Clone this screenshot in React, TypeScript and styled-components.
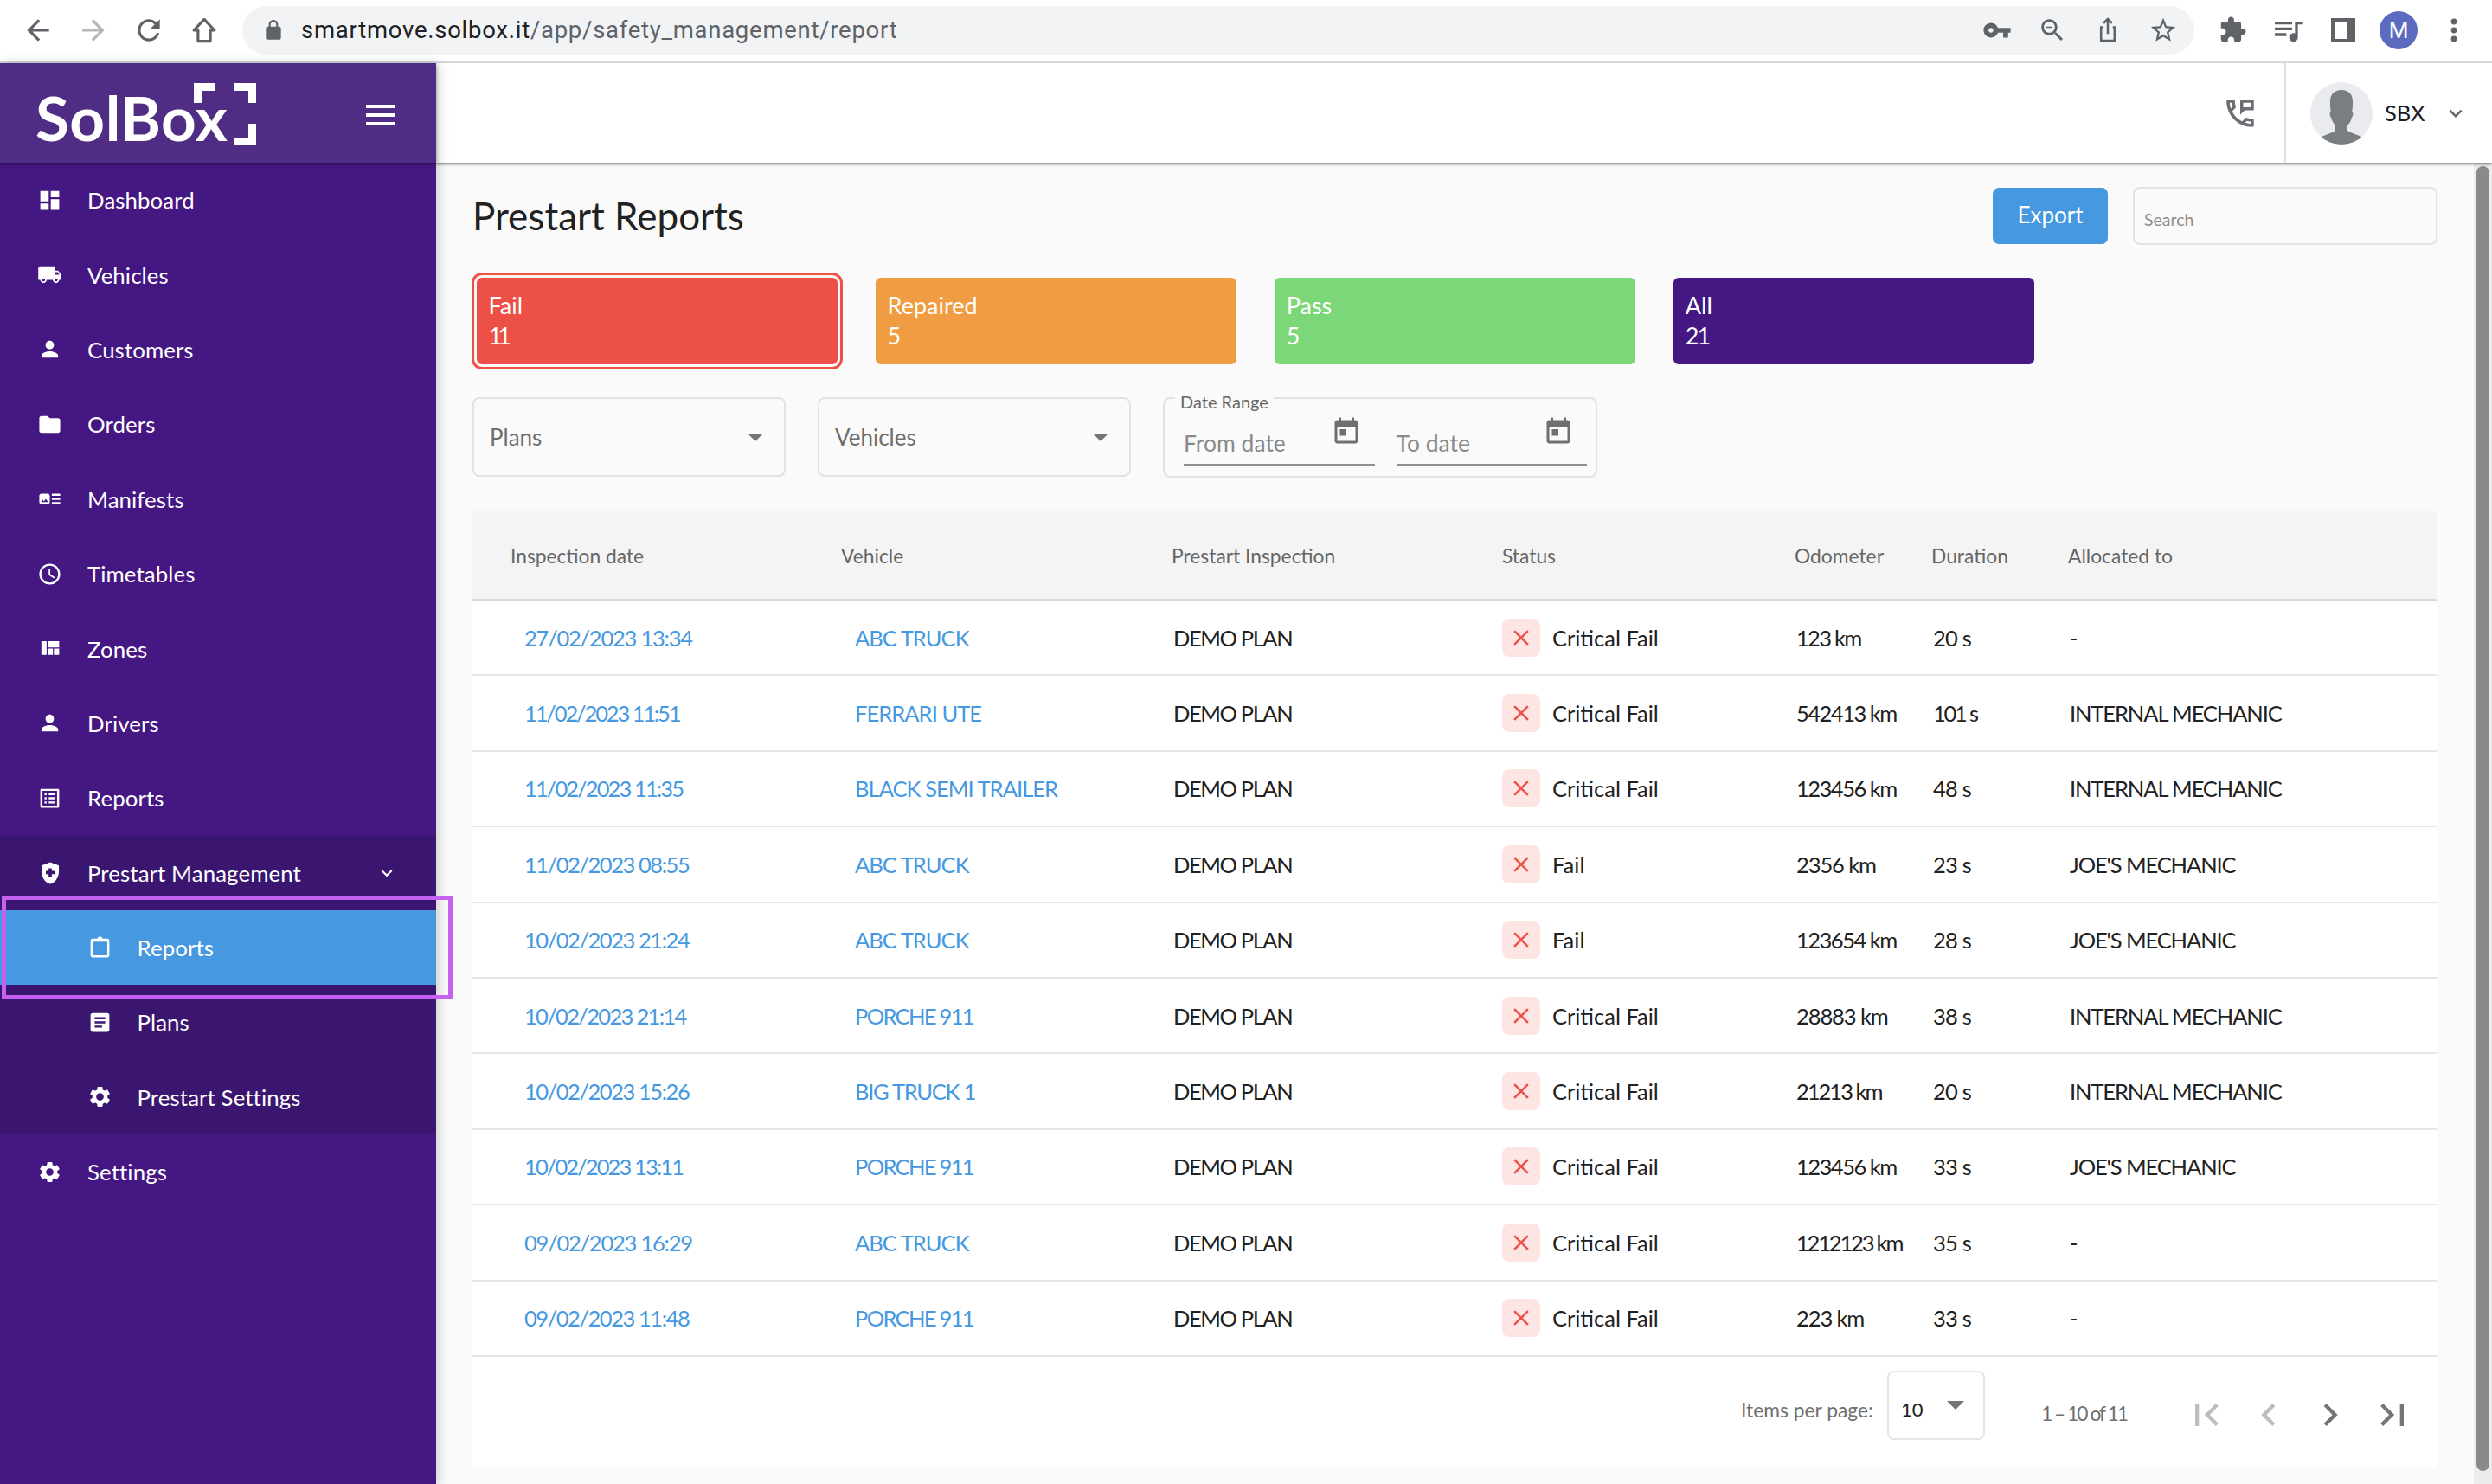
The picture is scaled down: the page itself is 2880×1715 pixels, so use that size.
import React from "react";
import styled, { createGlobalStyle } from "styled-components";

const FONT = `"Lato", "Open Sans", "Liberation Sans", sans-serif`;

const Global = createGlobalStyle`
  html, body { margin: 0; padding: 0; width: 2880px; height: 1715px; overflow: hidden; background: #fafafa; }
  * { box-sizing: border-box; }
  body { font-family: ${FONT}; }
`;

const P = {
  back: "M20 11H7.83l5.59-5.59L12 4l-8 8 8 8 1.41-1.41L7.83 13H20v-2z",
  reload: "M17.65 6.35C16.2 4.9 14.21 4 12 4c-4.42 0-7.99 3.58-7.99 8s3.57 8 7.99 8c3.73 0 6.84-2.55 7.73-6h-2.08c-.82 2.33-3.04 4-5.65 4-3.31 0-6-2.69-6-6s2.69-6 6-6c1.66 0 3.14.69 4.22 1.78L13 11h7V4l-2.35 2.35z",
  lock: "M18 8h-1V6c0-2.76-2.24-5-5-5S7 3.24 7 6v2H6c-1.1 0-2 .9-2 2v10c0 1.1.9 2 2 2h12c1.1 0 2-.9 2-2V10c0-1.1-.9-2-2-2zM9 6c0-1.66 1.34-3 3-3s3 1.34 3 3v2H9V6z",
  key: "M12.65 10C11.83 7.67 9.61 6 7 6c-3.31 0-6 2.69-6 6s2.69 6 6 6c2.61 0 4.83-1.67 5.65-4H17v4h4v-4h2v-4H12.65zM7 14c-1.1 0-2-.9-2-2s.9-2 2-2 2 .9 2 2-.9 2-2 2z",
  zoomOut: "M15.5 14h-.79l-.28-.27C15.41 12.59 16 11.11 16 9.5 16 5.91 13.09 3 9.5 3S3 5.91 3 9.5 5.91 16 9.5 16c1.61 0 3.09-.59 4.23-1.57l.27.28v.79l5 4.99L20.49 19l-4.99-5zm-6 0C7.01 14 5 11.99 5 9.5S7.01 5 9.5 5 14 7.01 14 9.5 11.99 14 9.5 14zM7 9h5v1H7z",
  star: "M22 9.24l-7.19-.62L12 2 9.19 8.63 2 9.24l5.46 4.73L5.82 21 12 17.27 18.18 21l-1.63-7.03L22 9.24zM12 15.4l-3.76 2.27 1-4.28-3.32-2.88 4.38-.38L12 6.1l1.71 4.04 4.38.38-3.32 2.88 1 4.28L12 15.4z",
  puzzle: "M20.5 11H19V7c0-1.1-.9-2-2-2h-4V3.5C13 2.12 11.88 1 10.5 1S8 2.12 8 3.5V5H4c-1.1 0-1.99.9-1.99 2v3.8H3.5c1.49 0 2.7 1.21 2.7 2.7s-1.21 2.7-2.7 2.7H2V20c0 1.1.9 2 2 2h3.8v-1.5c0-1.49 1.21-2.7 2.7-2.7 1.49 0 2.7 1.21 2.7 2.7V22H17c1.1 0 2-.9 2-2v-4h1.5c1.38 0 2.5-1.12 2.5-2.5S21.88 11 20.5 11z",
  queue: "M15 6H3v2h12V6zm0 4H3v2h12v-2zM3 16h8v-2H3v2zM17 6v8.18c-.31-.11-.65-.18-1-.18-1.66 0-3 1.34-3 3s1.34 3 3 3 3-1.34 3-3V8h3V6h-5z",
  dashboard: "M3 13h8V3H3v10zm0 8h8v-6H3v6zm10 0h8V11h-8v10zm0-18v6h8V3h-8z",
  truck: "M20 8h-3V4H3c-1.1 0-2 .9-2 2v11h2c0 1.66 1.34 3 3 3s3-1.34 3-3h6c0 1.66 1.34 3 3 3s3-1.34 3-3h2v-5l-3-4zM6 18.5c-.83 0-1.5-.67-1.5-1.5s.67-1.5 1.5-1.5 1.5.67 1.5 1.5-.67 1.5-1.5 1.5zm13.5-9l1.96 2.5H17V9.5h2.5zm-1.5 9c-.83 0-1.5-.67-1.5-1.5s.67-1.5 1.5-1.5 1.5.67 1.5 1.5-.67 1.5-1.5 1.5z",
  person: "M12 12c2.21 0 4-1.79 4-4s-1.79-4-4-4-4 1.79-4 4 1.79 4 4 4zm0 2c-2.67 0-8 1.34-8 4v2h16v-2c0-2.66-5.33-4-8-4z",
  folder: "M10 4H4c-1.1 0-1.99.9-1.99 2L2 18c0 1.1.9 2 2 2h16c1.1 0 2-.9 2-2V8c0-1.1-.9-2-2-2h-8l-2-2z",
  artTrack: "M22 13h-8v-2h8v2zm0-6h-8v2h8V7zm-8 10h8v-2h-8v2zm-2-8v6c0 1.1-.9 2-2 2H4c-1.1 0-2-.9-2-2V9c0-1.1.9-2 2-2h6c1.1 0 2 .9 2 2zm-1.5 6l-2.25-3-1.75 2.26-1.25-1.51L3.5 15h7z",
  schedule: "M11.99 2C6.47 2 2 6.48 2 12s4.47 10 9.99 10C17.52 22 22 17.52 22 12S17.52 2 11.99 2zM12 20c-4.42 0-8-3.58-8-8s3.58-8 8-8 8 3.58 8 8-3.58 8-8 8zm.5-13H11v6l5.25 3.15.75-1.23-4.5-2.67z",
  quilt: "M10 18h5v-6h-5v6zm-6 0h5V5H4v13zm12 0h5v-6h-5v6zM10 5v6h11V5H10z",
  listAlt: "M19 5v14H5V5h14m1.1-2H3.9c-.5 0-.9.4-.9.9v16.2c0 .4.4.9.9.9h16.2c.4 0 .9-.5.9-.9V3.9c0-.5-.5-.9-.9-.9zM11 7h6v2h-6V7zm0 4h6v2h-6v-2zm0 4h6v2h-6zM7 7h2v2H7zm0 4h2v2H7zm0 4h2v2H7z",
  shield: "M10.5 13H8v-3h2.5V7.5h3V10H16v3h-2.5v2.5h-3V13zM12 2L4 5v6.09c0 5.05 3.41 9.76 8 10.91 4.59-1.15 8-5.86 8-10.91V5l-8-3z",
  expand: "M16.59 8.59L12 13.17 7.41 8.59 6 10l6 6 6-6z",
  article: "M19 3H5c-1.1 0-2 .9-2 2v14c0 1.1.9 2 2 2h14c1.1 0 2-.9 2-2V5c0-1.1-.9-2-2-2zm-5 14H7v-2h7v2zm3-4H7v-2h10v2zm0-4H7V7h10v2z",
  clip: "M19 3h-4.5C14.2 1.8 13.2 1 12 1S9.8 1.8 9.5 3H5c-1.1 0-2 .9-2 2v14c0 1.1.9 2 2 2h14c1.1 0 2-.9 2-2V5c0-1.1-.9-2-2-2zM19 19H5V6h14v13z",
  gear: "M19.14 12.94c.04-.3.06-.61.06-.94 0-.32-.02-.64-.07-.94l2.03-1.58c.18-.14.23-.41.12-.61l-1.92-3.32c-.12-.22-.37-.29-.59-.22l-2.39.96c-.5-.38-1.03-.7-1.62-.94l-.36-2.54c-.04-.24-.24-.41-.48-.41h-3.84c-.24 0-.43.17-.47.41l-.36 2.54c-.59.24-1.13.57-1.62.94l-2.39-.96c-.22-.08-.47 0-.59.22L2.74 8.87c-.12.21-.08.47.12.61l2.03 1.58c-.05.3-.09.63-.09.94s.02.64.07.94l-2.03 1.58c-.18.14-.23.41-.12.61l1.92 3.32c.12.22.37.29.59.22l2.39-.96c.5.38 1.03.7 1.62.94l.36 2.54c.05.24.24.41.48.41h3.84c.24 0 .44-.17.47-.41l.36-2.54c.59-.24 1.13-.56 1.62-.94l2.39.96c.22.08.47 0 .59-.22l1.92-3.32c.12-.22.07-.47-.12-.61l-2.01-1.58zM12 15.6c-1.98 0-3.6-1.62-3.6-3.6s1.62-3.6 3.6-3.6 3.6 1.62 3.6 3.6-1.62 3.6-3.6 3.6z",
  today: "M19 3h-1V1h-2v2H8V1H6v2H5c-1.11 0-1.99.9-1.99 2L3 19c0 1.1.89 2 2 2h14c1.1 0 2-.9 2-2V5c0-1.1-.9-2-2-2zm0 16H5V8h14v11zM7 10h5v5H7z",
  first: "M18.41 16.59L13.82 12l4.59-4.59L17 6l-6 6 6 6zM6 6h2v12H6z",
  last: "M5.59 7.41L10.18 12l-4.59 4.59L7 18l6-6-6-6zM16 6h2v12h-2z",
  left: "M15.41 7.41L14 6l-6 6 6 6 1.41-1.41L10.83 12z",
  right: "M10 6L8.59 7.41 13.17 12l-4.58 4.59L10 18l6-6z",
  close: "M19 6.41L17.59 5 12 10.59 6.41 5 5 6.41 10.59 12 5 17.59 6.41 19 12 13.41 17.59 19 19 17.59 13.41 12z",
  phoneMsg: "M20 15.5c-1.25 0-2.45-.2-3.57-.57-.35-.11-.74-.03-1.02.24l-2.2 2.2c-2.83-1.44-5.15-3.75-6.59-6.59l2.2-2.21c.28-.26.36-.65.25-1C8.7 6.45 8.5 5.25 8.5 4c0-.55-.45-1-1-1H4c-.55 0-1 .45-1 1 0 9.39 7.61 17 17 17 .55 0 1-.45 1-1v-3.5c0-.55-.45-1-1-1zM5.03 5h1.5c.07.88.22 1.75.45 2.58l-1.2 1.21c-.4-1.21-.66-2.47-.75-3.79zM19 18.97c-1.32-.09-2.6-.35-3.8-.76l1.2-1.2c.85.24 1.72.39 2.6.45v1.51zM12 3v10l3-3h6V3h-9zm7 5h-5V5h5v3z",
};

const Glyph: React.FC<{ d: string; size: number; color?: string }> = ({ d, size, color = "currentColor" }) => (
  <svg width={size} height={size} viewBox="0 0 24 24" fill={color} style={{ flex: "none", display: "block" }}>
    <path d={d} />
  </svg>
);

/* The reference font sets "1" very narrow: tighten a string by how many it holds. */
const track = (text: string, base: number) =>
  base - (3.6 * (text.match(/1/g)?.length ?? 0)) / text.length;

const Page = styled.div`
  position: relative;
  width: 2880px;
  height: 1715px;
  display: flex;
  flex-direction: column;
  overflow: hidden;
`;

/* ---------- browser chrome ---------- */
const ChromeBar = styled.div`
  height: 73px;
  flex: none;
  background: #fff;
  border-bottom: 2px solid #dadce0;
  display: flex;
  align-items: center;
  padding: 0 0 2px 20px;
  color: #5f6368;
`;
const ChromeBtn = styled.div<{ $dim?: boolean }>`
  width: 48px;
  height: 48px;
  margin-right: 16px;
  display: flex;
  align-items: center;
  justify-content: center;
  color: ${(p) => (p.$dim ? "#b4b6b9" : "#5f6368")};
`;
const Omnibox = styled.div`
  width: 2256px;
  height: 56px;
  margin-left: 4px;
  border-radius: 28px;
  background: #f1f3f4;
  display: flex;
  align-items: center;
  padding: 0 4px 0 23px;
`;
const Url = styled.div`
  margin-left: 19px;
  flex: 1;
  font: 400 27.5px "Roboto", sans-serif;
  color: #5f6368;
  letter-spacing: 0.74px;
  b { font-weight: 400; color: #202124; }
`;
const OmniIcon = styled.div`
  width: 64px;
  display: flex;
  justify-content: center;
`;
const ChromeRight = styled.div`
  display: flex;
  align-items: center;
  margin-left: 12px;
`;
const ChromeSlot = styled.div`
  width: 64px;
  display: flex;
  justify-content: center;
  align-items: center;
`;
const ProfileDot = styled.div`
  width: 44px;
  height: 44px;
  border-radius: 50%;
  background: #5c6bc0;
  color: #fff;
  font: 400 26px "Roboto", sans-serif;
  display: flex;
  align-items: center;
  justify-content: center;
`;

/* ---------- shell ---------- */
const Shell = styled.div`
  flex: 1;
  display: flex;
  min-height: 0;
`;
const Sidebar = styled.aside`
  width: 504px;
  flex: none;
  background: #451782;
  color: #fff;
  position: relative;
  z-index: 2;
  box-shadow: 3px 0 12px rgba(0, 0, 0, 0.18);
`;
const Brand = styled.div`
  height: 115px;
  background: #4f2d84;
  box-shadow: 0 2px 4px rgba(0, 0, 0, 0.35);
  display: flex;
  align-items: center;
  padding-left: 41px;
  position: relative;
`;
const Wordmark = styled.div`
  position: relative;
  font: 700 71px/1 ${FONT};
  color: #fff;
  letter-spacing: 0.5px;
  width: 254px;
  height: 70px;
  margin-top: 8px;
`;
const Brackets = styled.svg`
  position: absolute;
  left: 183px;
  top: -4px;
`;
const Burger = styled.div`
  margin-left: 128px;
  margin-top: 4px;
  width: 33px;
  height: 24px;
  display: flex;
  flex-direction: column;
  justify-content: space-between;
  i { display: block; height: 4px; background: #fff; }
`;
const NavRow = styled.div<{ $sub?: boolean; $active?: boolean }>`
  height: 86.4px;
  display: flex;
  align-items: center;
  padding-left: ${(p) => (p.$sub ? "115px" : "57.5px")};
  background: ${(p) => (p.$active ? "#4699e0" : "transparent")};
  font: 400 25.8px ${FONT};
  color: #fff;
`;
const NavIconBox = styled.div`
  width: 44px;
  height: 44px;
  margin-left: -22px;
  display: flex;
  align-items: center;
  justify-content: center;
`;
const NavLabel = styled.span`
  margin-left: 21.5px;
  flex: 1;
  letter-spacing: 0.1px;
`;
const NavCaret = styled.div`
  width: 30px;
  margin-right: 42px;
  display: flex;
  justify-content: center;
`;
const NavGroup = styled.div`
  background: #3b1670;
`;
const Highlight = styled.div`
  position: absolute;
  left: 2px;
  top: 1035px;
  width: 521px;
  height: 120px;
  border: 5px solid #c561f1;
  z-index: 5;
`;

/* ---------- content ---------- */
const Right = styled.div`
  flex: 1;
  display: flex;
  flex-direction: column;
  min-width: 0;
`;
const TopBar = styled.header`
  height: 115px;
  flex: none;
  background: #fff;
  box-shadow: 0 2px 3px rgba(0, 0, 0, 0.4);
  position: relative;
  z-index: 1;
  display: flex;
  justify-content: flex-end;
  color: #6b6e72;
`;
const PhoneSlot = styled.div`
  display: flex;
  align-items: center;
  margin-right: 30px;
`;
const UserBox = styled.div`
  width: 240px;
  border-left: 2px solid #dfdfdf;
  display: flex;
  align-items: center;
  padding-left: 28px;
`;
const Avatar = styled.div`
  width: 72px;
  height: 72px;
  border-radius: 50%;
  overflow: hidden;
  flex: none;
`;
const UserName = styled.span`
  margin: 0 0 2px 14px;
  font: 400 25.5px ${FONT};
  color: #1c1c1c;
`;
const UserCaret = styled.div`
  margin-left: 20px;
  color: #666;
`;
const Below = styled.div`
  flex: 1;
  display: flex;
  min-height: 0;
`;
const Main = styled.main`
  flex: 1;
  padding: 29px 42px 0 42px;
  background: #fafafa;
  min-width: 0;
`;
const Scroll = styled.div`
  width: 21px;
  flex: none;
  background: #ececec;
  padding: 4px 3px 0;
`;
const ScrollThumb = styled.div`
  width: 15px;
  height: 1508px;
  background: #8a8a8a;
  border-radius: 8px;
`;
const TitleRow = styled.div`
  height: 65px;
  display: flex;
  align-items: center;
`;
const Title = styled.h1`
  margin: -2px 0 0;
  flex: 1;
  font: 400 44px ${FONT};
  color: #212121;
`;
const ExportBtn = styled.button`
  width: 133px;
  height: 65px;
  border: 0;
  border-radius: 7px;
  background: #4699e0;
  color: #fff;
  font: 400 26px ${FONT};
  padding-bottom: 4px;
`;
const SearchBox = styled.div`
  margin-left: 29px;
  width: 352px;
  height: 67px;
  border: 2px solid #e2e2e2;
  border-radius: 8px;
  display: flex;
  align-items: center;
  padding: 8px 11px 0;
  font: 400 19.5px ${FONT};
  color: #8d8d8d;
`;
const Stats = styled.div`
  display: flex;
  gap: 44.1px;
  margin: 39px 0 0 4.5px;
`;
const Stat = styled.div<{ $bg: string; $selected?: boolean }>`
  width: 417px;
  height: 100px;
  border-radius: 6px;
  background: ${(p) => p.$bg};
  color: #fff;
  padding: 14px 0 0 14px;
  font: 400 27px/35px ${FONT};
  ${(p) => p.$selected && `outline: 3px solid ${p.$bg}; outline-offset: 3px; `}
`;
const StatCount = styled.div<{ $track?: number }>`
  letter-spacing: ${(p) => p.$track ?? 0}px;
`;
const Filters = styled.div`
  display: flex;
  gap: 37px;
  margin-top: 38px;
`;
const SelectBox = styled.div`
  width: 362px;
  height: 92px;
  border: 2px solid #e2e2e2;
  border-radius: 8px;
  display: flex;
  align-items: center;
  justify-content: space-between;
  padding: 0 24px 0 18px;
  font: 400 26px ${FONT};
  color: #6e6e6e;
`;
const Tri = styled.i<{ $size?: number }>`
  display: block;
  width: 0;
  height: 0;
  border-left: ${(p) => p.$size ?? 9}px solid transparent;
  border-right: ${(p) => p.$size ?? 9}px solid transparent;
  border-top: ${(p) => p.$size ?? 9}px solid #757575;
`;
const DateBox = styled.div`
  position: relative;
  width: 502px;
  height: 93px;
  border: 2px solid #e2e2e2;
  border-radius: 8px;
  display: flex;
  gap: 25px;
  padding: 0 10px 0 22px;
`;
const Legend = styled.span`
  position: absolute;
  left: 12px;
  top: -9px;
  padding: 0 6px;
  background: #fafafa;
  font: 400 20px/24px ${FONT};
  color: #666;
`;
const DateField = styled.div`
  width: 221px;
  height: 78px;
  border-bottom: 3px solid #8f8f8f;
  display: flex;
  align-items: center;
  justify-content: space-between;
  padding: 27px 15px 0 0;
  font: 400 26.5px ${FONT};
  color: #8a8a8a;
`;
const CalSlot = styled.div`
  margin-top: -26px;
  color: #6f6f6f;
`;

/* ---------- table ---------- */
const Card = styled.section`
  margin-top: 39px;
  height: 1106px;
  background: #fff;
`;
const Cols = `382px 382px 382px 338px 158px 158px 1fr`;
const HeadRow = styled.div`
  height: 103px;
  background: #f4f4f4;
  border-bottom: 2px solid #d9d9d9;
  display: grid;
  grid-template-columns: ${Cols};
  align-items: center;
  font: 400 22.8px ${FONT};
  color: #666;
`;
const HeadCell = styled.div`
  padding-left: 44px;
`;
const BodyRow = styled.div`
  height: 87.4px;
  border-bottom: 2px solid #e4e4e4;
  display: grid;
  grid-template-columns: ${Cols};
  align-items: center;
  font: 400 25.5px ${FONT};
  color: #212121;
`;
const Cell = styled.div<{ $track: number }>`
  padding-left: 46px;
  white-space: nowrap;
  letter-spacing: ${(p) => p.$track}px;
`;
const LinkCell = styled.a<{ $track: number }>`
  padding-left: 60px;
  color: #4699e0;
  text-decoration: none;
  white-space: nowrap;
  letter-spacing: ${(p) => p.$track}px;
`;
const StatusCell = styled.div`
  padding-left: 44px;
  display: flex;
  align-items: center;
`;
const Badge = styled.span`
  width: 44px;
  height: 44px;
  border-radius: 8px;
  background: #fde5e3;
  color: #ec5047;
  display: flex;
  align-items: center;
  justify-content: center;
  margin-right: 14px;
`;
const Pager = styled.div`
  height: 129px;
  display: flex;
  align-items: center;
  color: #6f6f6f;
  font: 400 22.8px ${FONT};
  padding-left: 1466px;
`;
const PerPage = styled.span`
  width: 169px;
  margin-top: -6px;
  white-space: nowrap;
`;
const PageSelect = styled.div`
  width: 113px;
  height: 80px;
  border: 2px solid #e6e6e6;
  border-radius: 8px;
  display: flex;
  align-items: center;
  justify-content: space-between;
  padding: 10px 22px 0 14px;
  margin-top: -17px;
  font: 400 22px ${FONT};
  color: #212121;
`;
const PageTri = styled(Tri)`
  margin-top: -10px;
`;
const Range = styled.span`
  margin-left: 65px;
  width: 150px;
  margin-top: 2px;
  white-space: nowrap;
  letter-spacing: -2px;
`;
const PageNav = styled.div`
  margin-left: 15px;
  display: flex;
  gap: 19.5px;
  margin-top: 6px;
`;
const PageBtn = styled.div<{ $off?: boolean }>`
  color: ${(p) => (p.$off ? "#bdbdbd" : "#757575")};
`;

const nav: [string, string][] = [
  ["Dashboard", P.dashboard],
  ["Vehicles", P.truck],
  ["Customers", P.person],
  ["Orders", P.folder],
  ["Manifests", P.artTrack],
  ["Timetables", P.schedule],
  ["Zones", P.quilt],
  ["Drivers", P.person],
  ["Reports", P.listAlt],
];

const rows: [string, string, string, string, string, string][] = [
  ["27/02/2023 13:34", "ABC TRUCK", "Critical Fail", "123 km", "20 s", "-"],
  ["11/02/2023 11:51", "FERRARI UTE", "Critical Fail", "542413 km", "101 s", "INTERNAL MECHANIC"],
  ["11/02/2023 11:35", "BLACK SEMI TRAILER", "Critical Fail", "123456 km", "48 s", "INTERNAL MECHANIC"],
  ["11/02/2023 08:55", "ABC TRUCK", "Fail", "2356 km", "23 s", "JOE'S MECHANIC"],
  ["10/02/2023 21:24", "ABC TRUCK", "Fail", "123654 km", "28 s", "JOE'S MECHANIC"],
  ["10/02/2023 21:14", "PORCHE 911", "Critical Fail", "28883 km", "38 s", "INTERNAL MECHANIC"],
  ["10/02/2023 15:26", "BIG TRUCK 1", "Critical Fail", "21213 km", "20 s", "INTERNAL MECHANIC"],
  ["10/02/2023 13:11", "PORCHE 911", "Critical Fail", "123456 km", "33 s", "JOE'S MECHANIC"],
  ["09/02/2023 16:29", "ABC TRUCK", "Critical Fail", "1212123 km", "35 s", "-"],
  ["09/02/2023 11:48", "PORCHE 911", "Critical Fail", "223 km", "33 s", "-"],
];

export default function App() {
  return (
    <Page>
      <Global />
      <ChromeBar>
        <ChromeBtn><Glyph d={P.back} size={38} /></ChromeBtn>
        <ChromeBtn $dim><svg width="38" height="38" viewBox="0 0 24 24" fill="currentColor"><path d="M4 11h12.17l-5.59-5.59L12 4l8 8-8 8-1.41-1.41L16.17 13H4v-2z" /></svg></ChromeBtn>
        <ChromeBtn><Glyph d={P.reload} size={38} /></ChromeBtn>
        <ChromeBtn>
          <svg width="38" height="38" viewBox="0 0 24 24" fill="none" stroke="currentColor" strokeWidth="2" strokeLinejoin="round"><path d="M12 4L4.5 12H7.5V20H16.5V12H19.5Z" /></svg>
        </ChromeBtn>
        <Omnibox>
          <Glyph d={P.lock} size={26} />
          <Url><b>smartmove.solbox.it</b>/app/safety_management/report</Url>
          <OmniIcon><Glyph d={P.key} size={34} /></OmniIcon>
          <OmniIcon><Glyph d={P.zoomOut} size={34} /></OmniIcon>
          <OmniIcon>
            <svg width="34" height="34" viewBox="0 0 24 24" fill="none" stroke="currentColor" strokeWidth="1.8"><path d="M8 9.5H6.5v11h11v-11H16M12 15V3M8.5 6.2L12 2.8l3.5 3.4" /></svg>
          </OmniIcon>
          <OmniIcon><Glyph d={P.star} size={34} /></OmniIcon>
        </Omnibox>
        <ChromeRight>
          <ChromeSlot><Glyph d={P.puzzle} size={33} /></ChromeSlot>
          <ChromeSlot><Glyph d={P.queue} size={40} /></ChromeSlot>
          <ChromeSlot>
            <svg width="30" height="30" viewBox="0 0 30 30"><path fill="currentColor" fillRule="evenodd" d="M1 1h28v28H1zM5 5v20h15V5z" /></svg>
          </ChromeSlot>
          <ChromeSlot><ProfileDot>M</ProfileDot></ChromeSlot>
          <ChromeSlot>
            <svg width="10" height="34" viewBox="0 0 10 34" fill="currentColor"><circle cx="5" cy="7" r="3.4" /><circle cx="5" cy="17" r="3.4" /><circle cx="5" cy="27" r="3.4" /></svg>
          </ChromeSlot>
        </ChromeRight>
      </ChromeBar>
      <Shell>
        <Sidebar>
          <Brand>
            <Wordmark>
              SolBox
              <Brackets width="72" height="72" viewBox="0 0 72 72" fill="none" stroke="#fff" strokeWidth="9">
                <path d="M4.5 23V4.5H24M47 4.5H67.5V23M67.5 47V67.5H47" />
              </Brackets>
            </Wordmark>
            <Burger><i /><i /><i /></Burger>
          </Brand>
          {nav.map(([label, d]) => (
            <NavRow key={label}>
              <NavIconBox><Glyph d={d} size={29} /></NavIconBox>
              <NavLabel>{label}</NavLabel>
            </NavRow>
          ))}
          <NavGroup>
            <NavRow>
              <NavIconBox><Glyph d={P.shield} size={30} /></NavIconBox>
              <NavLabel>Prestart Management</NavLabel>
              <NavCaret><Glyph d={P.expand} size={26} /></NavCaret>
            </NavRow>
            <NavRow $sub $active>
              <NavIconBox><Glyph d={P.clip} size={29} /></NavIconBox>
              <NavLabel>Reports</NavLabel>
            </NavRow>
            <NavRow $sub>
              <NavIconBox><Glyph d={P.article} size={29} /></NavIconBox>
              <NavLabel>Plans</NavLabel>
            </NavRow>
            <NavRow $sub>
              <NavIconBox><Glyph d={P.gear} size={29} /></NavIconBox>
              <NavLabel>Prestart Settings</NavLabel>
            </NavRow>
          </NavGroup>
          <NavRow>
            <NavIconBox><Glyph d={P.gear} size={29} /></NavIconBox>
            <NavLabel>Settings</NavLabel>
          </NavRow>
        </Sidebar>
        <Right>
          <TopBar>
            <PhoneSlot><Glyph d={P.phoneMsg} size={42} /></PhoneSlot>
            <UserBox>
              <Avatar>
                <svg width="72" height="72" viewBox="0 0 72 72">
                  <rect width="72" height="72" fill="#e9ebee" />
                  <path fill="#7a7d82" d="M36 9c-8 0-13 5-13 13 0 4 0 9 .8 12-1.6.6-1.5 5 .4 7 .7 4 3 7 4.8 8.8v6.2c-3 2-10 4.4-16 7V72h46v-9c-6-2.6-13-5-16-7v-6.2c2-1.8 4.1-4.8 4.8-8.8 1.9-2 2-6.4.4-7 .8-3 .8-8 .8-12 0-8-5-13-13-13z" />
                </svg>
              </Avatar>
              <UserName>SBX</UserName>
              <UserCaret><Glyph d={P.expand} size={30} /></UserCaret>
            </UserBox>
          </TopBar>
          <Below>
            <Main>
              <TitleRow>
                <Title>Prestart Reports</Title>
                <ExportBtn>Export</ExportBtn>
                <SearchBox>Search</SearchBox>
              </TitleRow>
              <Stats>
                <Stat $bg="#ec5047" $selected>Fail<StatCount $track={-5}>11</StatCount></Stat>
                <Stat $bg="#f09c42">Repaired<StatCount>5</StatCount></Stat>
                <Stat $bg="#7bd778">Pass<StatCount>5</StatCount></Stat>
                <Stat $bg="#451782">All<StatCount $track={-2}>21</StatCount></Stat>
              </Stats>
              <Filters>
                <SelectBox>Plans<Tri /></SelectBox>
                <SelectBox>Vehicles<Tri /></SelectBox>
                <DateBox>
                  <Legend>Date Range</Legend>
                  <DateField>From date<CalSlot><Glyph d={P.today} size={36} /></CalSlot></DateField>
                  <DateField>To date<CalSlot><Glyph d={P.today} size={36} /></CalSlot></DateField>
                </DateBox>
              </Filters>
              <Card>
                <HeadRow>
                  {["Inspection date", "Vehicle", "Prestart Inspection", "Status", "Odometer", "Duration", "Allocated to"].map((h) => (
                    <HeadCell key={h}>{h}</HeadCell>
                  ))}
                </HeadRow>
                {rows.map((r) => (
                  <BodyRow key={r[0]}>
                    <LinkCell $track={track(r[0], -1)}>{r[0]}</LinkCell>
                    <LinkCell $track={track(r[1], -0.95)}>{r[1]}</LinkCell>
                    <Cell $track={-1.4}>DEMO PLAN</Cell>
                    <StatusCell>
                      <Badge><Glyph d={P.close} size={30} /></Badge>
                      {r[2]}
                    </StatusCell>
                    <Cell $track={track(r[3], -1.1)}>{r[3]}</Cell>
                    <Cell $track={track(r[4], -0.8)}>{r[4]}</Cell>
                    <Cell $track={-1.1}>{r[5]}</Cell>
                  </BodyRow>
                ))}
                <Pager>
                  <PerPage>Items per page:</PerPage>
                  <PageSelect>10<PageTri $size={10} /></PageSelect>
                  <Range>1 – 10 of 11</Range>
                  <PageNav>
                    <PageBtn $off><Glyph d={P.first} size={52} /></PageBtn>
                    <PageBtn $off><Glyph d={P.left} size={52} /></PageBtn>
                    <PageBtn><Glyph d={P.right} size={52} /></PageBtn>
                    <PageBtn><Glyph d={P.last} size={52} /></PageBtn>
                  </PageNav>
                </Pager>
              </Card>
            </Main>
            <Scroll><ScrollThumb /></Scroll>
          </Below>
        </Right>
      </Shell>
      <Highlight />
    </Page>
  );
}
